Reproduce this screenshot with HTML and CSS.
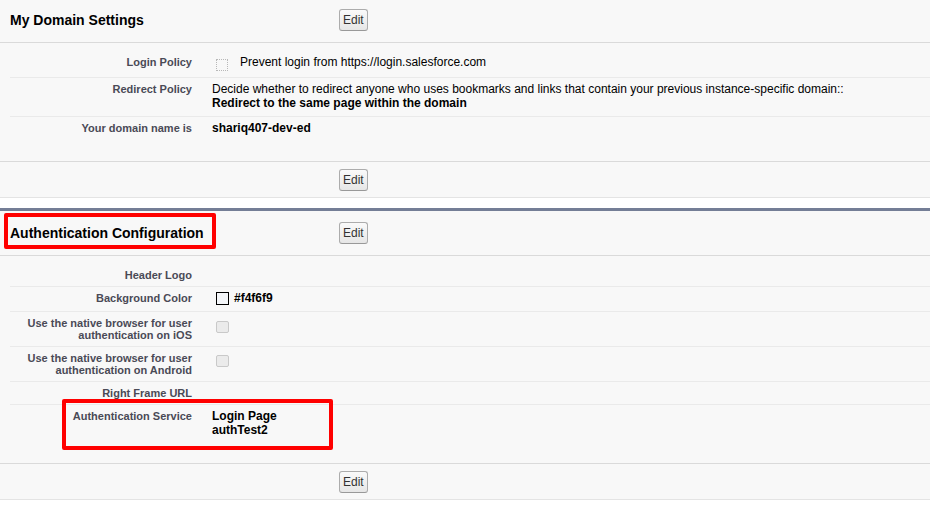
FILE: index.html
```html
<!DOCTYPE html>
<html>
<head>
<meta charset="utf-8">
<title>My Domain Settings</title>
<link rel="stylesheet" href="styles.css">
</head>
<body>
<section class="block block-first">
  <div class="block-head">
    <h2 class="block-title">My Domain Settings</h2>
    <button class="btn">Edit</button>
  </div>
  <div class="block-body">
    <div class="row">
      <div class="lbl">Login Policy</div>
      <div class="val val-flex"><span class="cb cb-dotted"></span><span>Prevent login from https://login.salesforce.com</span></div>
    </div>
    <div class="row">
      <div class="lbl">Redirect Policy</div>
      <div class="val">Decide whether to redirect anyone who uses bookmarks and links that contain your previous instance-specific domain::<br><b>Redirect to the same page within the domain</b></div>
    </div>
    <div class="row">
      <div class="lbl">Your domain name is</div>
      <div class="val"><b>shariq407-dev-ed</b></div>
    </div>
  </div>
  <div class="block-foot"><button class="btn">Edit</button></div>
</section>

<section class="block block-second">
  <div class="block-head">
    <h2 class="block-title">Authentication Configuration</h2>
    <button class="btn">Edit</button>
    <span class="mark mark-title"></span>
  </div>
  <div class="block-body">
    <div class="row">
      <div class="lbl">Header Logo</div>
      <div class="val"></div>
    </div>
    <div class="row">
      <div class="lbl">Background Color</div>
      <div class="val val-flex"><span class="swatch"></span><b>#f4f6f9</b></div>
    </div>
    <div class="row">
      <div class="lbl">Use the native browser for user authentication on iOS</div>
      <div class="val val-flex"><span class="cb cb-disabled"></span></div>
    </div>
    <div class="row">
      <div class="lbl">Use the native browser for user authentication on Android</div>
      <div class="val val-flex"><span class="cb cb-disabled cb-android"></span></div>
    </div>
    <div class="row">
      <div class="lbl">Right Frame URL</div>
      <div class="val"></div>
    </div>
    <div class="row row-marked">
      <div class="lbl">Authentication Service</div>
      <div class="val"><b>Login Page</b><br><b>authTest2</b></div>
      <span class="mark mark-service"></span>
    </div>
  </div>
  <div class="block-foot"><button class="btn">Edit</button></div>
</section>
</body>
</html>
```

FILE: styles.css
```css
html, body {
  margin: 0;
  padding: 0;
  background: #ffffff;
}

body {
  font-family: "Liberation Sans", Arial, sans-serif;
  font-size: 12px;
  color: #000;
}

.block {
  background: #f8f8f8;
}

.block-second {
  margin-top: 10px;
  border-top: 3px solid #747e96;
}

.block-head {
  position: relative;
  display: grid;
  grid-template-columns: 339px auto;
  justify-items: start;
  align-items: center;
  padding: 11px 0;
  border-bottom: 1px solid #dadada;
}

.block-first .block-head {
  padding-top: 9px;
}

.block-title {
  margin: 0;
  padding-left: 10px;
  font-size: 14px;
  font-weight: bold;
  line-height: 18px;
  color: #000;
}

.btn {
  font-family: "Liberation Sans", Arial, sans-serif;
  font-size: 12px;
  line-height: 20px;
  height: 22px;
  padding: 0 3px;
  color: #333;
  background: linear-gradient(#fafafa, #e6e6e6);
  border: 1px solid #acacac;
  border-bottom-color: #999;
  border-radius: 3px;
  margin: 0;
  cursor: pointer;
}

.block-body {
  padding: 8px 0 20px;
  border-bottom: 1px solid #dadada;
}

.row {
  position: relative;
  display: grid;
  grid-template-columns: 185px 1fr;
  margin-left: 10px;
  border-bottom: 1px solid #eaeaea;
}

.row:last-child {
  border-bottom: none;
}

.lbl {
  padding: 5px 3px 5px 0;
  text-align: right;
  font-size: 11px;
  font-weight: bold;
  line-height: 12px;
  color: #4a4a56;
}

.val {
  padding: 4px 0 6px 17px;
  line-height: 14px;
  min-height: 12px;
}

.val-flex {
  display: flex;
  align-items: flex-start;
}

.cb {
  display: inline-block;
  width: 12px;
  height: 12px;
  box-sizing: border-box;
  flex: none;
}

.cb-dotted {
  margin: 4px 12px 0 4px;
  border: 1px dotted #b8b8b8;
}

.cb-disabled {
  margin: 5px 0 0 4px;
  width: 13px;
  height: 12px;
  border: 1px solid #c9c9c9;
  border-radius: 2px;
  background: #ebebeb;
}

.cb-android {
  margin-top: 4px;
}

.swatch {
  display: inline-block;
  flex: none;
  width: 13px;
  height: 13px;
  box-sizing: border-box;
  margin: 1px 5px 0 4px;
  border: 1px solid #000;
  background: #f4f6f9;
}

.block-foot {
  padding: 7px 0 6px 339px;
  border-bottom: 1px solid #e4e4e4;
}

.mark {
  position: absolute;
  box-sizing: border-box;
  border: 4px solid #ff0000;
  border-radius: 2px;
  pointer-events: none;
}

.mark-title {
  top: 2px;
  left: 4px;
  width: 212px;
  height: 36px;
}

.mark-service {
  top: -6px;
  left: 52px;
  width: 271px;
  height: 51px;
}
```
